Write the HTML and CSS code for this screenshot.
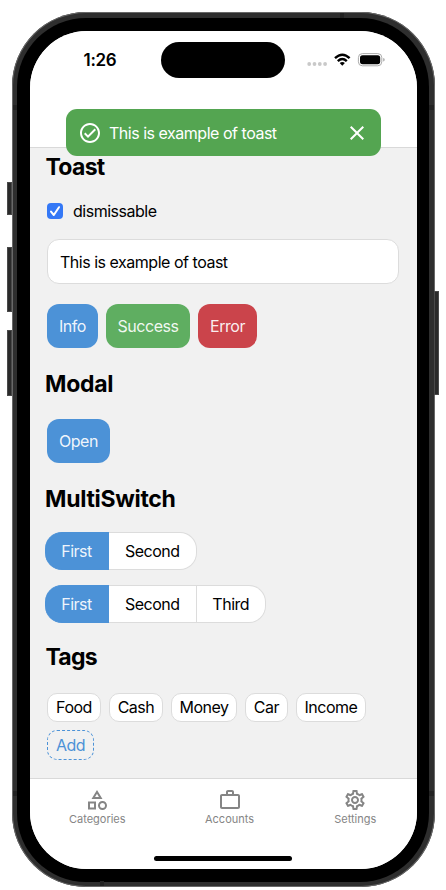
FILE: index.html
```html
<!DOCTYPE html>
<html lang="en">
<head>
<meta charset="utf-8">
<title>Components</title>
<link rel="stylesheet" href="styles.css">
</head>
<body>
<div class="phone">
  <i class="key key-action"></i><i class="key key-up"></i><i class="key key-down"></i><i class="key key-power"></i>
  <i class="band band-tl"></i><i class="band band-tr"></i><i class="band band-bl"></i><i class="band band-br"></i><i class="band band-top"></i><i class="band band-bottom"></i>
  <div class="bezel">
    <div class="screen">
      <header class="header">
        <div class="status">
          <span class="time">1:26</span>
          <span class="island"></span>
          <svg class="signals" viewBox="0 0 78 16" width="78" height="16">
            <g fill="#c9c9c9"><circle cx="2.2" cy="12" r="1.9"/><circle cx="7.5" cy="12" r="1.9"/><circle cx="12.8" cy="12" r="1.9"/><circle cx="18.1" cy="12" r="1.9"/></g>
            <g fill="none" stroke="#000" stroke-width="2.4"><path d="M28 6.1Q35.3-.8 42.6 6.1"/><path d="M30.8 9.1Q35.3 4.9 39.8 9.1"/></g>
            <path d="M32.7 10.9Q35.3 8.9 37.9 10.9L35.3 13.7z"/>
            <rect x="51.4" y="1.6" width="23.4" height="12.2" rx="4" fill="none" stroke="#aaa" stroke-width="1"/>
            <rect x="53" y="3.2" width="20.2" height="9" rx="2.6"/>
            <path d="M76.2 5.9q1.5.3 1.5 1.8t-1.5 1.8z" fill="#aaa"/>
          </svg>
        </div>
        <div class="toast">
          <svg class="toast-icon" viewBox="0 0 24 24" fill="currentColor"><path d="M12 2C6.48 2 2 6.48 2 12s4.48 10 10 10 10-4.48 10-10S17.52 2 12 2zm0 18c-4.41 0-8-3.59-8-8s3.59-8 8-8 8 3.59 8 8-3.59 8-8 8zm4.59-12.42L10 14.17l-2.59-2.58L6 13l4 4 8-8z"/></svg>
          <span class="toast-text">This is example of toast</span>
          <svg class="toast-icon" viewBox="0 0 24 24" fill="currentColor"><path d="M19 6.41L17.59 5 12 10.59 6.41 5 5 6.41 10.59 12 5 17.59 6.41 19 12 13.41 17.59 19 19 17.59 13.41 12z"/></svg>
        </div>
      </header>
      <main class="content">
        <h2 class="title title-toast">Toast</h2>
        <label class="check"><span class="box"><svg viewBox="0 0 16 16" width="16" height="16"><path d="M4 8.6 6.8 12 12 4.2" fill="none" stroke="#fff" stroke-width="2" stroke-linecap="round" stroke-linejoin="round"/></svg></span><span class="check-text">dismissable</span></label>
        <div class="field">This is example of toast</div>
        <div class="buttons">
          <button class="btn info">Info</button><button class="btn success">Success</button><button class="btn error">Error</button>
        </div>
        <h2 class="title title-modal">Modal</h2>
        <button class="btn open">Open</button>
        <h2 class="title title-switch">MultiSwitch</h2>
        <div class="switch"><span class="opt first">First</span><span class="opt second">Second</span></div>
        <div class="switch"><span class="opt first">First</span><span class="opt second">Second</span><span class="opt third">Third</span></div>
        <h2 class="title title-tags">Tags</h2>
        <div class="tags">
          <span class="tag food">Food</span><span class="tag cash">Cash</span><span class="tag money">Money</span><span class="tag car">Car</span><span class="tag income">Income</span><span class="tag add">Add</span>
        </div>
      </main>
      <nav class="nav">
        <a class="item categories"><svg viewBox="0 0 24 24" width="24" height="24" fill="currentColor"><path d="M12 2l-5.5 9h11L12 2zm0 3.84L13.93 9h-3.87L12 5.84zM17.5 13c-2.49 0-4.5 2.01-4.5 4.5s2.01 4.5 4.5 4.5 4.5-2.01 4.5-4.5-2.01-4.5-4.5-4.5zm0 7a2.5 2.5 0 010-5 2.5 2.5 0 010 5zM3 21.5h8v-8H3v8zm2-6h4v4H5v-4z"/></svg><span>Categories</span></a>
        <a class="item accounts"><svg viewBox="0 0 24 24" width="24" height="24" fill="currentColor"><path d="M14 6V4h-4v2h4zM4 8v11h16V8H4zm16-2c1.11 0 2 .89 2 2v11c0 1.11-.89 2-2 2H4c-1.11 0-2-.89-2-2l.01-11c0-1.11.88-2 1.99-2h4V4c0-1.11.89-2 2-2h4c1.11 0 2 .89 2 2v2h4z"/></svg><span>Accounts</span></a>
        <a class="item settings"><svg viewBox="0 0 24 24" width="24" height="24" fill="currentColor"><path d="M19.43 12.98c.04-.32.07-.64.07-.98 0-.34-.03-.66-.07-.98l2.11-1.65c.19-.15.24-.42.12-.64l-2-3.46c-.09-.16-.26-.25-.44-.25-.06 0-.12.01-.17.03l-2.49 1c-.52-.4-1.08-.73-1.69-.98l-.38-2.65C14.46 2.18 14.25 2 14 2h-4c-.25 0-.46.18-.49.42l-.38 2.65c-.61.25-1.17.59-1.69.98l-2.49-1c-.06-.02-.12-.03-.18-.03-.17 0-.34.09-.43.25l-2 3.46c-.13.22-.07.49.12.64l2.11 1.65c-.04.32-.07.65-.07.98 0 .33.03.66.07.98l-2.11 1.65c-.19.15-.24.42-.12.64l2 3.46c.09.16.26.25.44.25.06 0 .12-.01.17-.03l2.49-1c.52.4 1.08.73 1.69.98l.38 2.65c.03.24.24.42.49.42h4c.25 0 .46-.18.49-.42l.38-2.65c.61-.25 1.17-.59 1.69-.98l2.49 1c.06.02.12.03.18.03.17 0 .34-.09.43-.25l2-3.46c.12-.22.07-.49-.12-.64l-2.11-1.65zm-1.98-1.71c.04.31.05.52.05.73 0 .21-.02.43-.05.73l-.14 1.13.89.7 1.08.84-.7 1.21-1.27-.51-1.04-.42-.9.68c-.43.32-.84.56-1.25.73l-1.06.43-.16 1.13-.2 1.35h-1.4l-.19-1.35-.16-1.13-1.06-.43c-.43-.18-.83-.41-1.23-.71l-.91-.7-1.06.43-1.27.51-.7-1.21 1.08-.84.89-.7-.14-1.13c-.03-.31-.05-.54-.05-.74s.02-.43.05-.73l.14-1.13-.89-.7-1.08-.84.7-1.21 1.27.51 1.04.42.9-.68c.43-.32.84-.56 1.25-.73l1.06-.43.16-1.13.2-1.35h1.39l.19 1.35.16 1.13 1.06.43c.43.18.83.41 1.23.71l.91.7 1.06-.43 1.27-.51.7 1.21-1.07.85-.89.7.14 1.13zM12 8c-2.21 0-4 1.79-4 4s1.79 4 4 4 4-1.79 4-4-1.79-4-4-4zm0 6c-1.1 0-2-.9-2-2s.9-2 2-2 2 .9 2 2-.9 2-2 2z"/></svg><span>Settings</span></a>
        <i class="home"></i>
      </nav>
    </div>
  </div>
</div>
</body>
</html>
```
FILE: styles.css
```css
* { box-sizing: border-box; }
html { background: #fff; }
body {
  margin: 0;
  padding: 12px 0 0 11.5px;
  height: 890px;
  overflow: hidden;
  font: 16px/20px Inter, "Liberation Sans", sans-serif;
  letter-spacing: -0.48px;
  color: #000;
}
.phone {
  position: relative;
  width: 423px;
  height: 875px;
  padding: 5.5px;
  border-radius: 74px;
  background: #2e2e2e;
  box-shadow: inset 0 0 0 1px #686868;
}
.key { position: absolute; width: 5px; background: #2a2a2a; border: 1px solid #4a4a4a; }
.key-action { left: -4.5px; top: 170px; height: 33px; }
.key-up { left: -4.5px; top: 234.5px; height: 65px; }
.key-down { left: -4.5px; top: 317.5px; height: 66px; }
.key-power { right: -4.5px; top: 279px; height: 104px; }
.band { position: absolute; background: #222; width: 4.5px; height: 5px; }
.band-tl { left: 1px; top: 93px; }
.band-tr { right: 1px; top: 93px; }
.band-bl { left: 1px; top: 779px; }
.band-br { right: 1px; top: 779px; }
.band-top { left: 328px; top: 1px; }
.band-bottom { left: 88px; bottom: 1px; }
.bezel { height: 864px; padding: 13px 12.5px; border-radius: 69px; background: #000; }
.screen {
  display: flex;
  flex-direction: column;
  height: 838px;
  border-radius: 57px;
  overflow: hidden;
  background: #f1f1f1;
}
.header { flex: none; height: 117px; background: #fff; border-bottom: 1px solid #d9d9d9; }
.status { display: flex; height: 78.5px; padding: 11px 32px 0 54px; }
.time { width: 77.5px; padding-top: 8px; font-weight: 600; font-size: 17px; letter-spacing: -0.3px; }
.island { width: 124px; height: 36px; border-radius: 18px; background: #000; }
.signals { margin: 10px 0 0 22px; flex: none; }
.toast {
  position: relative;
  z-index: 1;
  display: flex;
  align-items: center;
  width: 315px;
  height: 47px;
  margin-left: 36px;
  padding: 0 12px;
  border-radius: 11px;
  background: #54a551;
  color: #fff;
}
.toast-icon { flex: none; width: 24px; height: 24px; }
.toast-text { flex: 1; padding-left: 7.5px; }
.content { flex: 1; padding: 0 17.5px 0 15.5px; }
.title { margin: 0; font-size: 23px; line-height: 28px; font-weight: 700; letter-spacing: -0.3px; }
.title-toast { padding-top: 5px; padding-left: 0.5px; letter-spacing: -0.7px; }
.check { display: flex; align-items: center; height: 20px; margin: 20px 0 0 2px; }
.box { display: flex; width: 16px; height: 16px; border-radius: 4px; background: #3478f6; }
.check-text { margin-left: 10px; }
.field {
  height: 45px;
  margin: 18.5px 0 0 2px;
  padding: 12px;
  border: 1px solid #dcdcdc;
  border-radius: 12px;
  background: #fff;
}
.buttons { display: flex; gap: 8px; margin: 20px 0 0 2px; }
.btn {
  height: 43.5px;
  padding: 0;
  border: 0;
  border-radius: 12px;
  font: inherit;
  letter-spacing: inherit;
  color: rgba(255, 255, 255, 0.93);
  background: #4c92d7;
}
.info { width: 51px; }
.success { width: 84px; background: #5fae61; }
.error { width: 59px; background: #cb444b; }
.title-modal { margin-top: 22px; }
.open { display: block; width: 63px; margin: 21.5px 0 0 2px; }
.title-switch { margin-top: 22px; }
.switch { display: flex; width: max-content; height: 38px; margin-top: 19px; }
.switch + .switch { margin-top: 15px; }
.opt {
  display: flex;
  align-items: center;
  justify-content: center;
  border: 1px solid #dcdcdc;
  border-left: 0;
  background: #fff;
}
.first { width: 64px; border-color: #4c92d7; border-radius: 17px 0 0 17px; background: #4c92d7; color: rgba(255, 255, 255, 0.93); }
.second { width: 87.5px; }
.third { width: 69.5px; }
.opt:last-child { border-radius: 0 17px 17px 0; }
.title-tags { margin-top: 20px; padding-left: 0.5px; letter-spacing: -0.8px; }
.tags { display: flex; flex-wrap: wrap; gap: 8px; margin: 22px 0 0 2px; }
.tag {
  display: flex;
  align-items: center;
  justify-content: center;
  height: 29.5px;
  border: 1px solid #dcdcdc;
  border-radius: 10px;
  background: #fff;
}
.food, .cash { width: 54px; }
.money { width: 66px; }
.car { width: 43px; }
.income { width: 70px; }
.add { width: 47px; border: 1px dashed #4c92d7; background: none; color: #4c92d7; }
.nav {
  position: relative;
  flex: none;
  display: flex;
  height: 91px;
  padding: 9.5px 0 0;
  border-top: 1px solid #d9d9d9;
  background: #fff;
  color: #858585;
  font-size: 11px;
  line-height: 15px;
  letter-spacing: 0;
}
.item { display: flex; flex-direction: column; align-items: center; }
.categories { width: 135.5px; }
.accounts { width: 129px; }
.settings { width: 122.5px; }
.home { position: absolute; left: 124.5px; bottom: 7.5px; width: 138px; height: 5px; border-radius: 3px; background: #000; }
```
